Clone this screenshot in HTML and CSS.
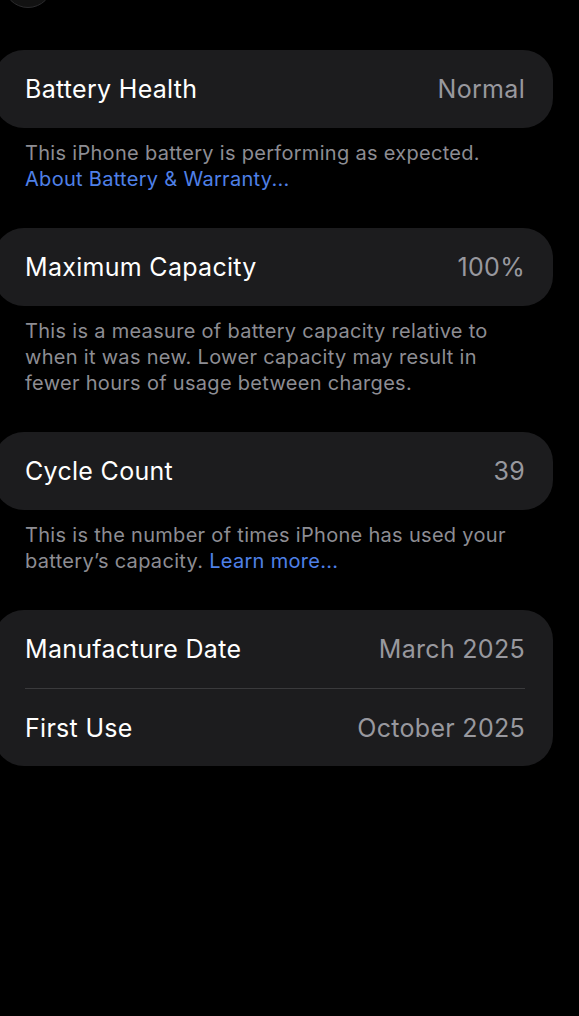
FILE: index.html
```html
<!DOCTYPE html>
<html lang="en">
<head>
    <meta charset="UTF-8">
    <meta name="viewport" content="width=device-width, initial-scale=1.0">
    <title>Battery Health</title>
    <link rel="stylesheet" href="styles.css">
</head>
<body>
    <div class="top-bar">
        <div class="back-button"></div>
    </div>

    <div class="settings">
        <div class="section">
            <div class="card">
                <div class="row">
                    <span class="label">Battery Health</span>
                    <span class="value">Normal</span>
                </div>
            </div>
            <p class="footer">This iPhone battery is performing as expected.<br><a href="#">About Battery &amp; Warranty...</a></p>
        </div>

        <div class="section">
            <div class="card">
                <div class="row">
                    <span class="label">Maximum Capacity</span>
                    <span class="value">100%</span>
                </div>
            </div>
            <p class="footer">This is a measure of battery capacity relative to<br>when it was new. Lower capacity may result in<br>fewer hours of usage between charges.</p>
        </div>

        <div class="section">
            <div class="card">
                <div class="row">
                    <span class="label">Cycle Count</span>
                    <span class="value">39</span>
                </div>
            </div>
            <p class="footer">This is the number of times iPhone has used your<br>battery’s capacity. <a href="#">Learn more...</a></p>
        </div>

        <div class="section">
            <div class="card">
                <div class="row">
                    <span class="label">Manufacture Date</span>
                    <span class="value">March 2025</span>
                </div>
                <div class="row">
                    <span class="label">First Use</span>
                    <span class="value">October 2025</span>
                </div>
            </div>
        </div>
    </div>
</body>
</html>
```

FILE: styles.css
```css
body {
    margin: 0;
    background-color: #000000;
    font-family: 'Inter', 'Noto Sans', sans-serif;
    color: #ffffff;
    height: 1016px;
    overflow: hidden;
}

.top-bar {
    height: 8px;
    overflow: hidden;
    padding-left: 3px;
}

.back-button {
    width: 50px;
    height: 50px;
    margin-top: -42px;
    border-radius: 50%;
    background-color: #121212;
    border: 1px solid #2c2c2e;
    box-sizing: border-box;
}

.settings {
    margin: 42px 26px 0 -6px;
}

.section {
    margin-bottom: 36px;
}

.card {
    background-color: #1c1c1e;
    border-radius: 30px;
    padding: 0 28px 0 31px;
}

.row {
    display: flex;
    justify-content: space-between;
    align-items: center;
    height: 78px;
    font-size: 25px;
    letter-spacing: 0.3px;
}

.row + .row {
    border-top: 1px solid #3a3a3c;
    height: 77px;
}

.label {
    color: #ffffff;
}

.value {
    color: #98989e;
}

.footer {
    margin: 0;
    padding: 12px 10px 0 31px;
    font-size: 20px;
    line-height: 26px;
    color: #8d8d93;
    letter-spacing: 0.3px;
    white-space: nowrap;
}

.footer a {
    color: #4f80e8;
    text-decoration: none;
}
```
